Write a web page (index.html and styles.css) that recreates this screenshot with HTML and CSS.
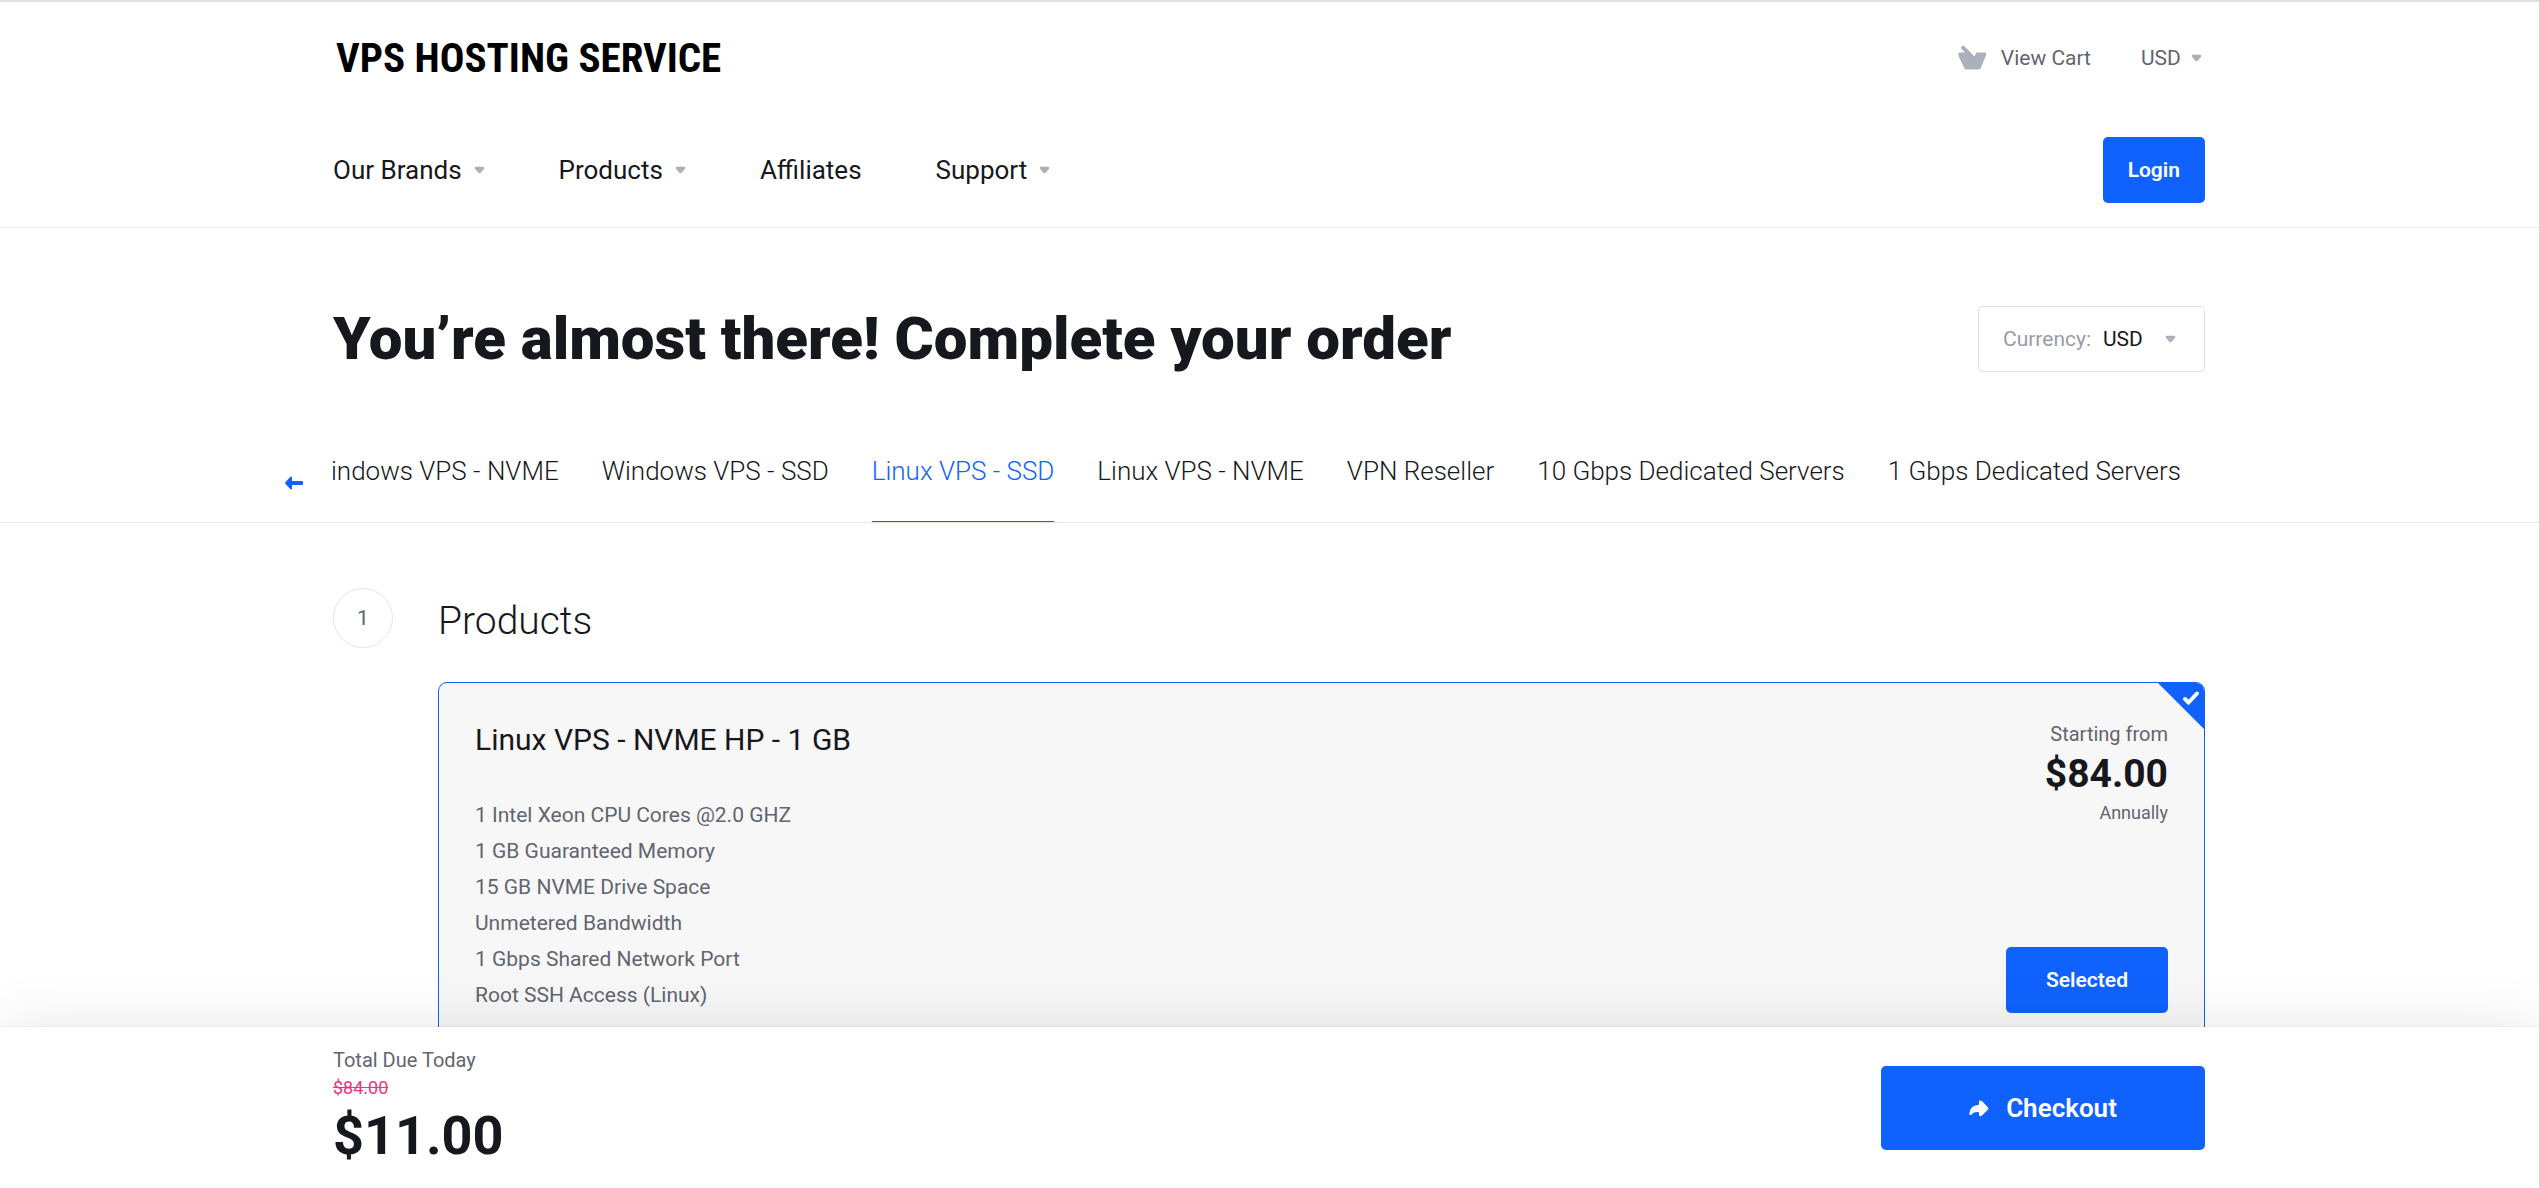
FILE: index.html
```html
<!DOCTYPE html>
<html lang="en">
<head>
    <meta charset="UTF-8">
    <title>Complete your order</title>
    <meta name="viewport" content="width=device-width, initial-scale=1.0">
    <link rel="stylesheet" href="styles.css">
</head>
<body>
    <div class="page">
        <header class="header">
            <div class="container topbar">
                <a class="logo" href="#">VPS HOSTING SERVICE</a>
                <div class="topbar-links">
                    <a class="cart" href="#">
                        <svg class="cart-icon" viewBox="0 0 28 26" aria-hidden="true">
                            <path d="M0.500 8.500Q0.500 7.500 1.500 7.500H7L3.300 3.800Q2.500 2.800 3.500 1.800L4.300 1Q5.300 0.300 6.200 1.100L16.500 11.500L18.500 7.500H27Q28 7.500 28 8.500V10.500L22.500 23.500Q22 24.500 21 24.500H8Q7 24.500 6.500 23.500L0.500 11Z"/>
                        </svg>
                        View Cart
                    </a>
                    <label class="picker">
                        <select class="select select-plain" aria-label="Currency">
                            <option>USD</option>
                        </select>
                        <svg class="caret" viewBox="0 0 10 7" aria-hidden="true"><path d="M1.500 0.500H8.500Q10 1 9 2.500L6 6Q5 7 4 6L1 2.500Q0 1 1.500 0.500Z"/></svg>
                    </label>
                </div>
            </div>
            <div class="container navbar">
                <nav class="nav">
                    <a href="#">Our Brands <svg class="caret" viewBox="0 0 10 7" aria-hidden="true"><path d="M1.500 0.500H8.500Q10 1 9 2.500L6 6Q5 7 4 6L1 2.500Q0 1 1.500 0.500Z"/></svg></a>
                    <a href="#">Products <svg class="caret" viewBox="0 0 10 7" aria-hidden="true"><path d="M1.500 0.500H8.500Q10 1 9 2.500L6 6Q5 7 4 6L1 2.500Q0 1 1.500 0.500Z"/></svg></a>
                    <a href="#">Affiliates</a>
                    <a href="#">Support <svg class="caret" viewBox="0 0 10 7" aria-hidden="true"><path d="M1.500 0.500H8.500Q10 1 9 2.500L6 6Q5 7 4 6L1 2.500Q0 1 1.500 0.500Z"/></svg></a>
                </nav>
                <button class="btn btn-login" type="button">Login</button>
            </div>
        </header>

        <main class="main">
            <div class="container title-row">
                <h1>You’re almost there! Complete your order</h1>
                <label class="picker currency">
                    <span>Currency:</span>
                    <select class="select">
                        <option>USD</option>
                    </select>
                    <svg class="caret" viewBox="0 0 10 7" aria-hidden="true"><path d="M1.500 0.500H8.500Q10 1 9 2.500L6 6Q5 7 4 6L1 2.500Q0 1 1.500 0.500Z"/></svg>
                </label>
            </div>

            <div class="tabs-bar">
                <div class="container tabs-wrap">
                    <button class="tabs-prev" type="button" aria-label="Previous">
                        <svg viewBox="0 0 18 14" aria-hidden="true"><path d="M0.500 6L5.500 0.800Q7 0 7 1.500V5H17Q18 5 18 6V8Q18 9 17 9H7V12.500Q7 14 5.500 13.200L0.500 8Q-0.300 7 0.500 6Z"/></svg>
                    </button>
                    <nav class="tabs">
                        <a href="#">Windows VPS - NVME</a>
                        <a href="#">Windows VPS - SSD</a>
                        <a class="active" href="#">Linux VPS - SSD</a>
                        <a href="#">Linux VPS - NVME</a>
                        <a href="#">VPN Reseller</a>
                        <a href="#">10 Gbps Dedicated Servers</a>
                        <a href="#">1 Gbps Dedicated Servers</a>
                    </nav>
                </div>
            </div>

            <section class="container step">
                <div class="step-number">1</div>
                <div class="step-content">
                    <h2>Products</h2>
                    <article class="card">
                        <svg class="card-check" viewBox="0 0 46 46" aria-hidden="true">
                            <path class="corner" d="M0 0H46V46Z"/>
                            <path class="tick" d="M27 16L30.500 19.500L39 10.500"/>
                        </svg>
                        <div class="card-info">
                            <h3>Linux VPS - NVME HP - 1 GB</h3>
                            <ul>
                                <li>1 Intel Xeon CPU Cores @2.0 GHZ</li>
                                <li>1 GB Guaranteed Memory</li>
                                <li>15 GB NVME Drive Space</li>
                                <li>Unmetered Bandwidth</li>
                                <li>1 Gbps Shared Network Port</li>
                                <li>Root SSH Access (Linux)</li>
                            </ul>
                        </div>
                        <div class="card-side">
                            <div class="price">
                                <span class="price-from">Starting from</span>
                                <strong>$84.00</strong>
                                <span class="price-cycle">Annually</span>
                            </div>
                            <button class="btn btn-selected" type="button">Selected</button>
                        </div>
                    </article>
                </div>
            </section>
        </main>

        <footer class="summary">
            <div class="container summary-row">
                <div class="total">
                    <span class="total-label">Total Due Today</span>
                    <s>$84.00</s>
                    <strong>$11.00</strong>
                </div>
                <button class="btn btn-checkout" type="button">
                    <svg viewBox="0 0 20 17" aria-hidden="true"><path d="M10 1.500Q10 0 11.500 0.500L13 1L19 7.500Q20 8.500 19 9.500L13 15.500Q12 16.500 11 16.200Q10 16 10 14.500V12.200Q5 11.500 2.500 14.500Q0.500 15.800 0.300 14Q1 5 10 4.800Z"/></svg>
                    Checkout
                </button>
            </div>
        </footer>
    </div>
</body>
</html>
```
FILE: styles.css
```css
* {
    box-sizing: border-box;
}

body {
    margin: 0;
    background: #fff;
    color: #17181d;
    font-family: Roboto, "Liberation Sans", sans-serif;
    font-size: 21px;
    line-height: 36px;
}

h1, h2, h3, ul {
    margin: 0;
    padding: 0;
}

a {
    color: inherit;
    text-decoration: none;
}

.page {
    display: flex;
    flex-direction: column;
    height: 100vh;
}

.container {
    width: 100%;
    max-width: 1921px;
    margin: 0 auto;
    padding: 0 25px 0 24px;
}

.caret {
    width: 11px;
    height: 8px;
    fill: #acafbc;
}

/* Header */
.header {
    border-top: 2px solid #e0e0e0;
    border-bottom: 1px solid #e6e6e8;
}

.topbar {
    display: flex;
    justify-content: space-between;
    align-items: center;
    height: 111px;
}

.logo {
    padding-left: 3px;
    color: #000;
    font-family: "Roboto Condensed", Roboto, sans-serif;
    font-size: 41px;
    font-weight: 700;
}

.topbar-links {
    display: flex;
    align-items: center;
    gap: 50px;
    color: #62656f;
}

.cart {
    display: flex;
    align-items: center;
    gap: 15px;
}

.cart-icon {
    width: 28px;
    height: 26px;
    fill: #acafbc;
}

.picker {
    display: flex;
    align-items: center;
    gap: 10px;
    padding-right: 3px;
}

.select {
    appearance: none;
    padding: 0;
    border: none;
    background: none;
    color: #17181d;
    font: inherit;
}

.select-plain {
    color: #62656f;
}

.navbar {
    display: flex;
    justify-content: space-between;
    align-items: center;
    height: 114px;
}

.nav {
    display: flex;
    gap: 74px;
    font-size: 26px;
}

.nav a {
    display: flex;
    align-items: center;
    gap: 12px;
}

.btn {
    border: none;
    border-radius: 5px;
    background: #0f62fe;
    color: #fff;
    font: inherit;
    font-weight: 600;
    height: 66px;
    cursor: pointer;
}

.btn-login {
    padding: 0 25px;
}

/* Title and tabs */
.main {
    flex: 1;
    min-height: 0;
    overflow: hidden;
}

.title-row {
    display: flex;
    justify-content: space-between;
    align-items: center;
    padding-top: 78px;
}

h1 {
    font-size: 60px;
    font-weight: 900;
    line-height: 66px;
}

.currency {
    gap: 12px;
    height: 66px;
    padding: 0 28px 0 24px;
    border: 1px solid #dedfe2;
    border-radius: 5px;
}

.currency span {
    color: #989ba6;
}

.currency .caret {
    margin-left: 10px;
}

.tabs-bar {
    margin-top: 66px;
    border-bottom: 1px solid #e6e6e8;
}

.tabs-wrap {
    position: relative;
}

.tabs-prev {
    position: absolute;
    left: -24px;
    top: 38px;
    padding: 0;
    border: none;
    background: none;
    line-height: 0;
    cursor: pointer;
}

.tabs-prev svg {
    width: 18px;
    height: 14px;
    fill: #0f62fe;
}

.tabs {
    display: flex;
    justify-content: flex-end;
    gap: 43px;
    overflow: hidden;
    padding-right: 24px;
    font-size: 26px;
    font-weight: 300;
    white-space: nowrap;
}

.tabs a {
    padding: 15px 0 32px;
    border-bottom: 1px solid transparent;
}

.tabs .active {
    border-color: #0f62fe;
    color: #0f62fe;
}

/* Products step */
.step {
    display: flex;
    gap: 45px;
    padding-top: 65px;
}

.step-number {
    flex: none;
    width: 60px;
    height: 60px;
    border: 1px solid #e6e6e8;
    border-radius: 50%;
    color: #62656f;
    line-height: 58px;
    text-align: center;
}

.step-content {
    flex: 1;
}

h2 {
    padding: 9px 0 37px;
    font-size: 39px;
    font-weight: 300;
    line-height: 48px;
}

.card {
    position: relative;
    display: flex;
    justify-content: space-between;
    padding: 36px;
    border: 1px solid #0f62fe;
    border-radius: 9px;
    background: #f7f7f7;
    overflow: hidden;
}

.card-check {
    position: absolute;
    top: 0;
    right: 0;
    width: 46px;
    height: 46px;
}

.corner {
    fill: #0f62fe;
}

.tick {
    fill: none;
    stroke: #fff;
    stroke-width: 4;
    stroke-linecap: round;
}

h3 {
    margin-bottom: 36px;
    font-size: 30px;
    font-weight: 400;
    line-height: 42px;
}

.card ul {
    color: #62656f;
    list-style: none;
}

.card-side {
    display: flex;
    flex-direction: column;
    justify-content: space-between;
    align-items: flex-end;
}

.price {
    display: flex;
    flex-direction: column;
    align-items: flex-end;
    color: #62656f;
}

.price-from {
    font-size: 20px;
    line-height: 30px;
}

.price strong {
    color: #17181d;
    font-size: 39px;
    line-height: 51px;
}

.price-cycle {
    font-size: 18px;
    line-height: 26px;
}

.btn-selected {
    padding: 0 40px;
}

/* Order summary */
.summary {
    position: relative;
    padding: 18px 0 17px;
    background: #fff;
    box-shadow: 0 0 1px rgba(0, 0, 0, 0.2), 0 0 60px rgba(0, 0, 0, 0.1);
}

.summary-row {
    display: flex;
    justify-content: space-between;
    align-items: center;
}

.total {
    display: flex;
    flex-direction: column;
}

.total-label {
    color: #62656f;
    font-size: 20px;
    line-height: 30px;
}

.total s {
    color: #f5317f;
    font-size: 18px;
    line-height: 26px;
}

.total strong {
    font-size: 54px;
    line-height: 70px;
}

.btn-checkout {
    display: flex;
    justify-content: center;
    align-items: center;
    gap: 17px;
    width: 324px;
    height: 84px;
    font-size: 26px;
}

.btn-checkout svg {
    width: 20px;
    height: 17px;
    fill: #fff;
}
```
